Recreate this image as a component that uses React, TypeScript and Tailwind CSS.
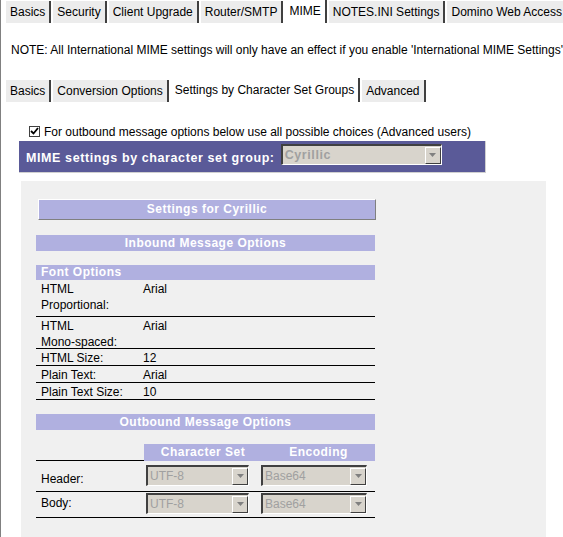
import React from "react";

const Tab = ({ label, active }: { label: string; active?: boolean }) => (
  <div className={`px-[4px] flex items-center border-r-2 border-r-[#404040] border-l border-l-white ${active ? "bg-white h-[24px] -mt-[2px]" : "bg-[#ececec] h-[22px]"}`}>
    {label}
  </div>
);

const Sel = ({ v, w }: { v: string; w: string }) => (
  <div className={`${w} h-[21px] bg-[#d8d4cc] border-t-2 border-l-2 border-[#404040] border-r border-b border-r-white border-b-white flex items-center justify-between text-[#a0a0a0] pl-[2px]`}>
    <span>{v}</span>
    <div className="w-[16px] h-[17px] bg-[#d8d4cc] border border-t-white border-l-white border-r-[#404040] border-b-[#404040] flex items-center justify-center">
      <svg width="7" height="4" viewBox="0 0 7 4"><path d="M0 0h7L3.5 4z" fill="#808080" /></svg>
    </div>
  </div>
);

const Bar = ({ children, cls = "" }: { children: React.ReactNode; cls?: string }) => (
  <div className={`bg-[#b0b0e0] text-white font-bold tracking-[0.5px] ${cls}`}>{children}</div>
);

export default function App() {
  const rows: [string, string, string][] = [
    ["HTML\nProportional:", "Arial", "h-[37px]"],
    ["HTML\nMono-spaced:", "Arial", "h-[32px]"],
    ["HTML Size:", "12", "h-[17px]"],
    ["Plain Text:", "Arial", "h-[17px]"],
    ["Plain Text Size:", "10", "h-[17px]"],
  ];
  return (
    <div className="w-[563px] h-[537px] overflow-hidden bg-white text-[12px] text-black border-l border-l-[#808080] relative" style={{ fontFamily: '"Liberation Sans", Arial, sans-serif' }}>
      <div className="flex items-end h-[24px] pl-[4px] gap-[1px] whitespace-nowrap border-b border-b-white">
        <Tab label="Basics" /><Tab label="Security" /><Tab label="Client Upgrade" /><Tab label="Router/SMTP" /><Tab label="MIME" active /><Tab label="NOTES.INI Settings" /><Tab label="Domino Web Access" />
      </div>
      <div className="pl-[10px] pt-[17px] h-[54px] whitespace-nowrap">NOTE: All International MIME settings will only have an effect if you enable 'International MIME Settings'</div>
      <div className="flex items-end h-[24px] pl-[4px] gap-[1px] whitespace-nowrap">
        <Tab label="Basics" /><Tab label="Conversion Options" /><Tab label="Settings by Character Set Groups" active /><Tab label="Advanced" />
      </div>
      <div className="pl-[28px] pt-[20px] flex items-center gap-[4px] h-[39px]">
        <div className="w-[11px] h-[11px] border border-[#404040] bg-white flex items-center justify-center">
          <svg width="9" height="9" viewBox="0 0 9 9"><path d="M1 4l2.5 2.5L8 1" stroke="#000" strokeWidth="1.8" fill="none" /></svg>
        </div>
        <span>For outbound message options below use all possible choices (Advanced users)</span>
      </div>
      <div className="ml-[18px] w-[467px] h-[32px] bg-[#5a5a98] border-r border-b border-r-[#d0d0d0] border-b-[#d0d0d0] flex items-end pb-[4px] pl-[7px] gap-[6px] text-white font-bold text-[12.5px] tracking-[0.6px]">
        <span>MIME settings by character set group:</span>
        <div className="mb-[3px]"><Sel v="Cyrillic" w="w-[161px]" /></div>
      </div>
      <div className="ml-[20px] mt-[8px] w-[525px] h-[360px] bg-[#f0f0f0] pt-[18px] pl-[15px]">
        <div className="w-[340px]">
          <div className="ml-[2px] h-[21px] bg-[#b0b0e0] border border-t-white border-l-white border-r-[#808080] border-b-[#808080] text-white font-bold text-center tracking-[0.5px] leading-[19px]">Settings for Cyrillic</div>
          <Bar cls="mt-[15px] h-[16px] leading-[16px] text-center w-[339px]">Inbound Message Options</Bar>
          <Bar cls="mt-[14px] h-[15px] leading-[15px] pl-[5px] w-[339px]">Font Options</Bar>
          <div className="w-[339px]">
            {rows.map(([l, v, h], i) => (
              <div key={i} className={`flex border-b border-b-black ${h} leading-[16px]`}>
                <div className="w-[107px] pl-[5px] whitespace-pre-line pt-[1px]">{l}</div>
                <div className="pt-[1px]">{v}</div>
              </div>
            ))}
          </div>
          <Bar cls="mt-[14px] h-[16px] leading-[16px] text-center w-[339px]">Outbound Message Options</Bar>
          <div className="mt-[14px] flex w-[339px] h-[17px]">
            <div className="w-[108px] border-b border-b-black" />
            <div className="flex-1 bg-[#b0b0e0] text-white font-bold tracking-[0.5px] flex leading-[16px]">
              <div className="w-[118px] text-center">Character Set</div>
              <div className="flex-1 text-center">Encoding</div>
            </div>
          </div>
          {["Header:", "Body:"].map((l, i) => (
            <div key={l} className={`flex w-[339px] border-b border-b-black ${i === 0 ? "h-[31px] pt-[4px]" : "h-[26px] pt-[1px]"}`}>
              <div className={`w-[110px] pl-[5px] ${i === 0 ? "pt-[5px]" : "pt-[1px]"}`}>{l}</div>
              <Sel v="UTF-8" w="w-[103px]" />
              <div className="ml-[12px]"><Sel v="Base64" w="w-[106px]" /></div>
            </div>
          ))}
        </div>
      </div>
    </div>
  );
}
